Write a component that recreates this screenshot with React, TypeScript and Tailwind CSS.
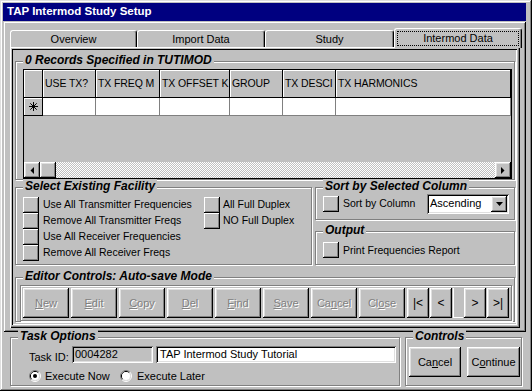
import React from "react";

const raised =
  "shadow-[inset_-1px_-1px_#000,inset_1px_1px_#fff,inset_-2px_-2px_#808080,inset_2px_2px_#dfdfdf]";
const raisedThin = "shadow-[inset_-1px_-1px_#000,inset_1px_1px_#fff,inset_-2px_-2px_#808080]";
const pageFrame =
  "shadow-[inset_1px_1px_#fff,inset_-1px_-1px_#000,inset_-2px_-2px_#808080,inset_2px_2px_#c0c0c0,inset_-3px_-3px_#c0c0c0,inset_3px_3px_#000,inset_-4px_-4px_#fff]";
const sunken =
  "shadow-[inset_1px_1px_#808080,inset_-1px_-1px_#fff,inset_2px_2px_#000,inset_-2px_-2px_#dfdfdf]";
const etched = "border border-[#808080] shadow-[inset_1px_1px_#fff,1px_1px_#fff]";
const disabledText = "text-[#808080] [text-shadow:1px_1px_0_#fff]";

function Group({
  title,
  className = "",
  children,
}: {
  title: string;
  className?: string;
  children?: React.ReactNode;
}) {
  return (
    <div className={`relative ${etched} ${className}`}>
      <span className="absolute left-[7px] top-[-9px] bg-[#c0c0c0] px-[2px] text-[12px] leading-[15px] font-bold italic whitespace-nowrap">
        {title}
      </span>
      {children}
    </div>
  );
}

function SquareBtn() {
  return <div className={`w-[16px] h-[16px] shrink-0 bg-[#c0c0c0] ${raisedThin}`} />;
}

function Radio({ checked }: { checked?: boolean }) {
  return (
    <svg width="12" height="12" viewBox="0 0 12 12" className="shrink-0">
      <path d="M2.11 9.89 A5.5 5.5 0 0 1 9.89 2.11" fill="none" stroke="#808080" />
      <path d="M9.89 2.11 A5.5 5.5 0 0 1 2.11 9.89" fill="none" stroke="#fff" />
      <path d="M2.82 9.18 A4.5 4.5 0 0 1 9.18 2.82" fill="none" stroke="#000" />
      <path d="M9.18 2.82 A4.5 4.5 0 0 1 2.82 9.18" fill="none" stroke="#dfdfdf" />
      <circle cx="6" cy="6" r="4" fill="#fff" />
      {checked && <circle cx="6" cy="6" r="2" fill="#000" />}
    </svg>
  );
}

// header labels as they show in the narrow columns
const cols = [
  { label: "USE TX?", w: "w-[53px]" },
  { label: "TX FREQ M", w: "w-[64px]" },
  { label: "TX OFFSET K", w: "w-[70px]" },
  { label: "GROUP", w: "w-[53px]" },
  { label: "TX DESCI", w: "w-[53px]" },
  { label: "TX HARMONICS", w: "flex-1" },
];

function RecordGrid() {
  return (
    <div className="w-[489px] h-[110px] border border-black flex flex-col bg-[#c0c0c0]">
      <div className="flex h-[28px] shrink-0">
        <div className="w-[19px] border-r border-b border-black shadow-[inset_1px_1px_#fff]" />
        {cols.map((c) => (
          <div
            key={c.label}
            className={`${c.w} overflow-hidden whitespace-nowrap border-r border-b border-black shadow-[inset_1px_1px_#fff] pl-[2px] flex items-center text-[10.5px] tracking-[-0.1px]`}
          >
            {c.label}
          </div>
        ))}
      </div>
      <div className="flex h-[18px] shrink-0">
        <div className="w-[19px] border-r border-b border-black shadow-[inset_1px_1px_#fff] flex items-center justify-center">
          <svg width="9" height="9" viewBox="0 0 9 9">
            <path d="M4.5 0v9M0 4.5h9M1.3 1.3l6.4 6.4M7.7 1.3l-6.4 6.4" stroke="#000" strokeWidth="1" />
          </svg>
        </div>
        {cols.map((c) => (
          <div key={c.label} className={`${c.w} bg-white border-r border-b border-[#808080]`} />
        ))}
      </div>
      <div className="flex-1" />
      <div className="flex h-[16px] shrink-0">
        <div className={`w-[16px] h-[16px] bg-[#c0c0c0] ${raised} flex items-center justify-center`}>
          <svg width="4" height="7" viewBox="0 0 4 7">
            <path d="M4 0v7L0.5 3.5z" fill="#000" />
          </svg>
        </div>
        <div className={`w-[16px] h-[16px] bg-[#c0c0c0] ${raised}`} />
        <div className="flex-1 bg-[repeating-conic-gradient(#c0c0c0_0_25%,#fff_0_50%)] bg-[length:2px_2px]" />
        <div className={`w-[16px] h-[16px] bg-[#c0c0c0] ${raised} flex items-center justify-center`}>
          <svg width="4" height="7" viewBox="0 0 4 7">
            <path d="M0 0v7L3.5 3.5z" fill="#000" />
          </svg>
        </div>
      </div>
    </div>
  );
}

function Mnemonic({ text, at }: { text: string; at: number }) {
  return (
    <>
      {text.slice(0, at)}
      <span className="underline underline-offset-[1px]">{text[at]}</span>
      {text.slice(at + 1)}
    </>
  );
}

const editorBtns = [
  { t: "New", u: 0 },
  { t: "Edit", u: 0 },
  { t: "Copy", u: 0 },
  { t: "Del", u: 0 },
  { t: "Find", u: 0 },
  { t: "Save", u: 0 },
  { t: "Cancel", u: 2 },
  { t: "Close", u: 2 },
];

function Tab({ label, selected, w }: { label: string; selected?: boolean; w: string }) {
  if (selected) {
    return (
      <div
        className={`${w} h-[20px] relative z-10 -mb-[1px] bg-[#c0c0c0] rounded-t-[3px] border-t border-l border-white border-r border-r-black shadow-[inset_-1px_0_#808080] p-[2px]`}
      >
        <div className="h-full border border-dotted border-black flex items-center justify-center text-[11px]">
          {label}
        </div>
      </div>
    );
  }
  return (
    <div
      className={`${w} h-[17px] mt-[2px] rounded-t-[3px] border-t border-l border-white border-r border-r-black shadow-[inset_-1px_0_#808080] flex items-center justify-center text-[11px]`}
    >
      {label}
    </div>
  );
}

export default function App() {
  return (
    <div
      className="relative w-[532px] h-[391px] bg-[#c0c0c0] text-black pl-[3px] pr-[6px] pt-[3px] shadow-[inset_-1px_-1px_#000,inset_1px_1px_#dfdfdf,inset_-2px_-2px_#808080,inset_2px_2px_#fff] overflow-hidden font-['Liberation_Sans',Arial,sans-serif]"
    >
      {/* Title bar */}
      <div className="h-[18px] bg-[#000080] text-white font-bold text-[11.5px] flex items-center pl-[4px]">
        TAP Intermod Study Setup
      </div>

      {/* Main tab panel */}
      <div className={`ml-[1px] mt-[1px] h-[310px] pt-[6px] pl-[6px] ${raisedThin}`}>
        <div className="flex h-[19px] items-start">
          <Tab label="Overview" w="w-[127px]" />
          <Tab label="Import Data" w="w-[128px]" />
          <Tab label="Study" w="w-[129px]" />
          <Tab label="Intermod Data" w="w-[128px]" selected />
        </div>
        <div className={`w-[510px] h-[281px] px-[5px] pt-[14px] flex flex-col ${pageFrame}`}>
          <Group title="0 Records Specified in TUTIMOD" className="h-[119px] pl-[7px] pt-[7px]">
            <RecordGrid />
          </Group>

          <div className="mt-[7px] flex gap-[3px] h-[78px]">
            <Group title="Select Existing Facility" className="w-[297px] pl-[7px] pt-[9px] flex text-[10.5px]">
              <div className="w-[181px] flex flex-col">
                {[
                  "Use All Transmitter Frequencies",
                  "Remove All Transmitter Freqs",
                  "Use All Receiver Frequencies",
                  "Remove All Receiver Freqs",
                ].map((t) => (
                  <div key={t} className="flex items-center h-[16px]">
                    <SquareBtn />
                    <span className="ml-[4px] whitespace-nowrap">{t}</span>
                  </div>
                ))}
              </div>
              <div className="flex flex-col">
                {["All Full Duplex", "NO Full Duplex"].map((t) => (
                  <div key={t} className="flex items-center h-[16px]">
                    <SquareBtn />
                    <span className="ml-[3px] whitespace-nowrap">{t}</span>
                  </div>
                ))}
              </div>
            </Group>

            <div className="flex-1 flex flex-col">
              <Group title="Sort by Selected Column" className="h-[33px] pl-[7px] flex items-center text-[10.5px]">
                <SquareBtn />
                <span className="ml-[4px] w-[84px]">Sort by Column</span>
                <div className={`w-[82px] h-[20px] bg-white ${sunken} flex items-center pl-[3px] pr-[2px] text-[11px]`}>
                  <span className="flex-1">Ascending</span>
                  <div className={`w-[16px] h-[16px] bg-[#c0c0c0] ${raised} flex items-center justify-center`}>
                    <svg width="7" height="4" viewBox="0 0 7 4">
                      <path d="M0 0h7L3.5 4z" fill="#000" />
                    </svg>
                  </div>
                </div>
              </Group>
              <Group title="Output" className="mt-[11px] h-[34px] pl-[7px] pt-[10px] flex items-start text-[10.5px]">
                <SquareBtn />
                <span className="ml-[4px] leading-[16px]">Print Frequencies Report</span>
              </Group>
            </div>
          </div>

          <Group title="Editor Controls: Auto-save Mode" className="mt-[12px] h-[45px] pl-[4px] pt-[7px] pr-[2px]">
            <div className={`h-[36px] ${etched} pl-[2px] pt-[2px] flex gap-[2px]`}>
              {editorBtns.map((b) => (
                <div
                  key={b.t}
                  className={`w-[46px] h-[30px] ${raised} flex items-center justify-center text-[11px] ${disabledText}`}
                >
                  <Mnemonic text={b.t} at={b.u} />
                </div>
              ))}
              <div className="flex gap-[1px]">
                {["|<", "<"].map((t) => (
                  <div key={t} className={`w-[22px] h-[30px] ${raised} flex items-center justify-center text-[12px]`}>
                    {t}
                  </div>
                ))}
                <div className="w-[10px] h-[30px] border-l border-b border-white" />
                {[">", ">|"].map((t) => (
                  <div key={t} className={`w-[22px] h-[30px] ${raised} flex items-center justify-center text-[12px]`}>
                    {t}
                  </div>
                ))}
              </div>
            </div>
          </Group>
        </div>
      </div>

      {/* Bottom options */}
      <div className="mt-[5px] ml-[7px] flex gap-[5px] h-[49px]">
        <Group title="Task Options" className="w-[390px] pl-[18px] pt-[8px] text-[11px]">
          <div className="flex items-center h-[17px]">
            <span className="w-[43px] mt-[5px]">Task ID:</span>
            <div className={`w-[81px] h-[17px] ${sunken} bg-[#c0c0c0] flex items-center pl-[3px]`}>0004282</div>
            <div className={`ml-[3px] w-[240px] h-[17px] ${sunken} bg-white flex items-center pl-[4px]`}>
              TAP Intermod Study Tutorial
            </div>
          </div>
          <div className="mt-[6px] flex items-center h-[14px]">
            <Radio checked />
            <span className="ml-[4px] w-[75px]">Execute Now</span>
            <Radio />
            <span className="ml-[5px]">Execute Later</span>
          </div>
        </Group>
        <Group title="Controls" className="w-[117px] pl-[3px] pt-[9px] flex gap-[6px] text-[11px]">
          <div className={`w-[52px] h-[30px] ${raised} flex items-center justify-center`}>
            <Mnemonic text="Cancel" at={2} />
          </div>
          <div className={`w-[53px] h-[30px] ${raised} flex items-center justify-center`}>
            <Mnemonic text="Continue" at={1} />
          </div>
        </Group>
      </div>
    </div>
  );
}
